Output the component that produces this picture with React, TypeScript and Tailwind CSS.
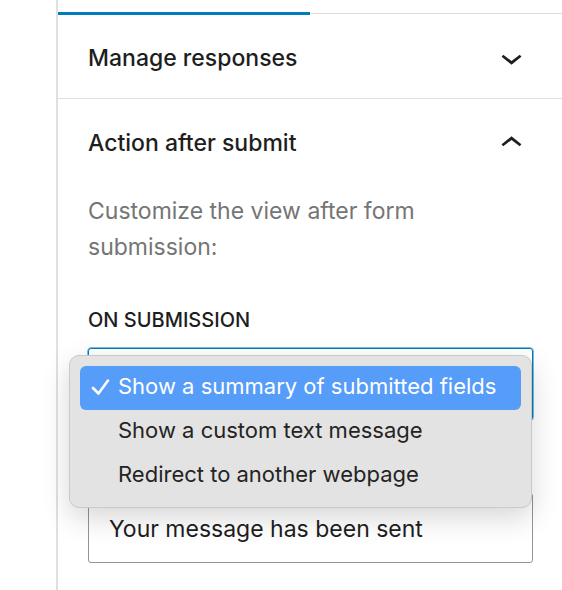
import React from 'react';

const ChevronDown = () => (
  <svg className="w-[43px] h-[43px] text-[#1e1e1e]" viewBox="0 0 24 24" fill="currentColor">
    <path d="M17.5 11.6L12 16l-5.5-4.4.9-1.2L12 14l4.6-3.6 1 1.2z" />
  </svg>
);

const ChevronUp = () => (
  <svg className="w-[43px] h-[43px] text-[#1e1e1e]" viewBox="0 0 24 24" fill="currentColor">
    <path d="M6.5 12.4L12 8l5.5 4.4-.9 1.2L12 10l-4.6 3.6-1-1.2z" />
  </svg>
);

const options = [
  'Show a summary of submitted fields',
  'Show a custom text message',
  'Redirect to another webpage',
];

const SelectMenu = ({ selected }: { selected: number }) => (
  <div className="absolute left-[69px] top-[355px] w-[463px] h-[153px] p-[10px] rounded-[10px] bg-[#e3e3e3] border border-[#c9c9c9] shadow-[0_10px_28px_rgba(0,0,0,0.16)]">
    {options.map((label, i) => (
      <div
        key={label}
        className={
          i === selected
            ? 'relative h-[44px] rounded-[6px] bg-[#569cf9] pl-[38px] text-[22px] leading-[40px] text-white'
            : 'relative h-[44px] rounded-[6px] pl-[38px] text-[22px] leading-[40px] text-[#242424]'
        }
      >
        {i === selected && (
          <svg className="absolute left-[11px] top-[13px] w-[19px] h-[16px]" viewBox="0 0 19 16" fill="none">
            <path d="M2 9 L7.5 14.5 L17 1.5" stroke="white" strokeWidth={2.6} strokeLinecap="round" strokeLinejoin="round" />
          </svg>
        )}
        {label}
      </div>
    ))}
  </div>
);

export default function App() {
  return (
    <div
      className="relative flex w-[562px] h-[590px] overflow-hidden bg-white"
      style={{ fontFamily: 'Inter, "Noto Sans", sans-serif' }}
    >
      <div className="w-[58px] shrink-0 border-r-2 border-[#e0e0e0]" />

      <div className="flex-1 flex flex-col">
        {/* tabs */}
        <div className="h-[15px] flex items-end">
          <div className="w-[252px] h-[3px] bg-[#007cba]" />
          <div className="flex-1 h-px mb-px bg-[#dddddd]" />
        </div>

        {/* Manage responses */}
        <div className="h-[84px] pt-[2px] pl-[30px] pr-[29px] flex items-center justify-between border-b border-[#e0e0e0]">
          <span className="text-[23px] leading-[28px] font-medium text-[#1e1e1e]">Manage responses</span>
          <ChevronDown />
        </div>

        {/* Action after submit */}
        <div className="h-[86px] pt-[2px] pl-[30px] pr-[29px] flex items-center justify-between">
          <span className="text-[23px] leading-[28px] font-medium text-[#1e1e1e]">Action after submit</span>
          <ChevronUp />
        </div>

        <div className="pt-[8px] pl-[30px] pr-[29px] flex flex-col">
          <p className="max-w-[360px] text-[23px] leading-[36px] text-[#757575]">
            Customize the view after form submission:
          </p>

          <div className="mt-[45px] text-[20px] leading-[20px] font-medium uppercase text-[#1e1e1e]">
            On submission
          </div>

          <div className="mt-[18px] h-[72px] rounded-[3px] border border-[#007cba] shadow-[0_0_0_0.5px_#007cba]" />

          <div className="mt-[73px] h-[70px] rounded-[3px] border border-[#949494] pl-[20px] pt-[21px] text-[23px] leading-[28px] text-[#1e1e1e]">
            Your message has been sent
          </div>
        </div>
      </div>

      <SelectMenu selected={0} />
    </div>
  );
}
